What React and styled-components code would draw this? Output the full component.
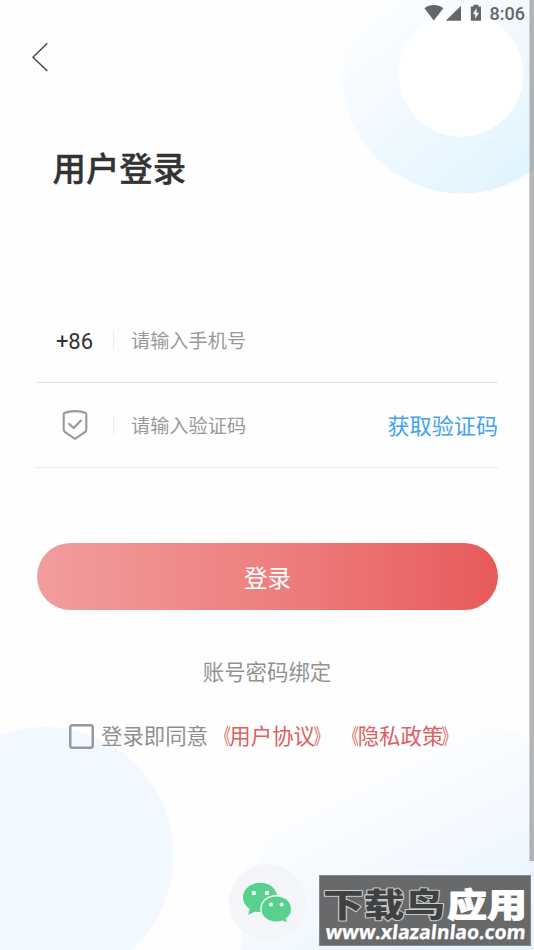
import React from "react";
import styled, { createGlobalStyle } from "styled-components";

const GlobalStyle = createGlobalStyle`
  *, *::before, *::after { box-sizing: border-box; }
  body { margin: 0; background: #fff; overflow: hidden; }
  button, input { font: inherit; border: 0; padding: 0; background: none; }
`;

const Screen = styled.main`
  position: relative;
  display: flex;
  flex-direction: column;
  width: 534px;
  height: 950px;
  overflow: hidden;
  isolation: isolate;
  background: #fefefe;
  color: #333;
  font-family: Roboto, "Noto Sans CJK SC", sans-serif;
`;

const Backdrop = styled.svg`
  position: absolute;
  inset: 0;
  z-index: -1;
`;

const StatusBar = styled.header`
  display: flex;
  justify-content: flex-end;
  height: 28px;
  padding-right: 9px;
  color: #666;
`;

const StatusIcons = styled.svg`
  display: block;
  width: 60px;
  height: 28px;
  margin-right: 6px;
`;

const Clock = styled.time`
  font-size: 18px;
  font-weight: 500;
  line-height: 28px;
`;

const BackButton = styled.button`
  display: block;
  width: 32px;
  height: 36px;
  margin: 11px 0 0 24px;
  svg { display: block; }
`;

const Title = styled.h1`
  margin: 70px 0 0 52.5px;
  font-size: 33.4px;
  font-weight: 500;
  line-height: 50px;
  -webkit-text-stroke: 0.4px #333;
`;

const Form = styled.form`
  display: flex;
  flex-direction: column;
  margin: 103px 36px 0;
`;

const Field = styled.label`
  display: flex;
  align-items: center;
  height: 85px;
  border-bottom: 1px solid ${(p) => p.$line};
`;

const Leading = styled.span`
  display: flex;
  flex: none;
  justify-content: center;
  width: 78px;
  height: 20px;
  align-items: center;
  border-right: 1px solid #ececec;
  svg { display: block; flex: none; }
`;

const DialCode = styled.span`
  padding-top: 3px;
  font-size: 22px;
  line-height: 28px;
`;

const Input = styled.input`
  flex: 1;
  min-width: 0;
  height: 32px;
  padding-top: 2px;
  margin-left: 17px;
  outline: none;
  font-size: 19.2px;
  &::placeholder { color: #999; opacity: 1; }
`;

const CodeButton = styled.button`
  flex: none;
  padding-top: 2px;
  color: #42a3ee;
  font-size: 22.1px;
  line-height: 32px;
`;

const LoginButton = styled.button`
  height: 67px;
  margin: 75px 0 0 1px;
  padding-top: 6px;
  border-radius: 34px;
  background: linear-gradient(90deg, #f19d9e 0%, #ee807f 50%, #e85a5b 100%);
  color: #fff;
  font-size: 23.6px;
  line-height: 61px;
`;

const BindLink = styled.button`
  align-self: center;
  margin-top: 47px;
  color: #929292;
  font-size: 21.4px;
  line-height: 32px;
`;

const Agreement = styled.div`
  display: flex;
  align-items: center;
  height: 32px;
  margin: 31px 0 0 69px;
  color: #8f8f8f;
  font-size: 21.4px;
  line-height: 32px;
  white-space: nowrap;
`;

const Checkbox = styled.span`
  flex: none;
  width: 25px;
  height: 25px;
  margin-right: 7px;
  border: 2px solid #999;
  border-radius: 3.5px;
  box-shadow: inset 0 0 0 0.5px #999;
`;

const Consent = styled.span`
  padding-top: 2px;
`;

const Policy = styled.span`
  color: #dc6060;
`;

const Bracket = styled.span`
  display: inline-block;
  width: 1em;
  transform: translateX(${(p) => (p.$side === "open" ? 1.5 : -1.5)}px) scaleX(0.7);
  transform-origin: ${(p) => (p.$side === "open" ? "right" : "left")} center;
`;

const WechatButton = styled.button`
  display: flex;
  align-self: center;
  align-items: center;
  justify-content: center;
  flex: none;
  width: 77px;
  height: 77px;
  margin-top: 112px;
  border-radius: 50%;
  background: #f4f5f9;
`;

const ScrollThumb = styled.div`
  position: absolute;
  top: 0;
  right: 0;
  width: 5px;
  height: 861px;
  border-left: 1px solid #cfcfcf;
  background: rgba(105, 105, 105, 0.48);
`;

const Stamp = styled.aside`
  position: absolute;
  left: 319px;
  top: 875px;
  width: 212px;
  height: 71px;
  border: 1px solid #858789;
  background: #67696a;
  svg { display: block; }
`;

function Background() {
  return (
    <Backdrop width="534" height="950" aria-hidden="true">
      <defs>
        <linearGradient id="ring" x1="0.12" y1="0.2" x2="0.78" y2="1">
          <stop offset="0" stopColor="#fdfeff" />
          <stop offset="0.45" stopColor="#f1f9ff" />
          <stop offset="1" stopColor="#def4ff" />
        </linearGradient>
        <linearGradient id="glow" gradientUnits="userSpaceOnUse" x1="388" y1="756" x2="493" y2="966">
          <stop offset="0" stopColor="#fdfeff" />
          <stop offset="1" stopColor="#e7f3ff" />
        </linearGradient>
      </defs>
      <circle cx="461.5" cy="74" r="119.5" fill="url(#ring)" />
      <circle cx="461" cy="74.5" r="62.3" fill="#fff" />
      <circle cx="45.5" cy="855" r="128" fill="#f1f8ff" />
      <circle cx="461" cy="945" r="220" fill="url(#glow)" />
    </Backdrop>
  );
}

function PolicyLink({ children }) {
  return (
    <Policy>
      <Bracket $side="open">《</Bracket>
      {children}
      <Bracket $side="close">》</Bracket>
    </Policy>
  );
}

export default function App() {
  return (
    <>
      <GlobalStyle />
      <Screen lang="zh-CN">
        <Background />
        <StatusBar>
          <StatusIcons viewBox="0 0 60 28" fill="#666">
            <path d="M0.4 8.2C5.8 3.8 14 3.8 19.3 8.2L9.8 20.5Z" />
            <path d="M21.7 20.8H37V5.7Z" />
            <path fillRule="evenodd" d="M46.8 6.5H49.5V4.7H54.3V6.5H57V20.8H46.8ZM52.5 8L48.8 14.2H51.2V18.8L55 12.7H52.5Z" />
          </StatusIcons>
          <Clock>8:06</Clock>
        </StatusBar>
        <BackButton aria-label="返回">
          <svg width="32" height="36" fill="none" stroke="#444" strokeWidth="1.4">
            <path d="M23.3 4.2L9 18.2L23.3 32" />
          </svg>
        </BackButton>
        <Title>用户登录</Title>
        <Form onSubmit={(e) => e.preventDefault()}>
          <Field $line="#e0e4e5">
            <Leading>
              <DialCode>+86</DialCode>
            </Leading>
            <Input placeholder="请输入手机号" />
          </Field>
          <Field $line="#e9ebec">
            <Leading>
              <svg width="28" height="32" viewBox="0 0 28 32" fill="none" stroke="#999" strokeWidth="2.1" strokeLinecap="round" strokeLinejoin="round">
                <path d="M14 2.1C18.4 2.1 22 2.8 24.2 3.8Q25.3 4.2 25.3 5.4V20.2Q25.3 22 23.9 23.2L14 29.8L4.1 23.2Q2.7 22 2.7 20.2V5.4Q2.7 4.2 3.8 3.8C6 2.8 9.6 2.1 14 2.1Z" />
                <path d="M8.1 14.9L12.6 19L20 11.6" />
              </svg>
            </Leading>
            <Input placeholder="请输入验证码" />
            <CodeButton type="button">获取验证码</CodeButton>
          </Field>
          <LoginButton>登录</LoginButton>
        </Form>
        <BindLink>账号密码绑定</BindLink>
        <Agreement>
          <Checkbox role="checkbox" aria-checked="false" />
          <Consent>
            登录即同意
            <PolicyLink>用户协议</PolicyLink>
            <PolicyLink>隐私政策</PolicyLink>
          </Consent>
        </Agreement>
        <WechatButton aria-label="微信登录">
          <svg width="50" height="42" viewBox="0 0 50 42">
            <path fill="#58d08e" d="M18 .8C8.5.8 1 6.9 1 15.2C1 20 3.4 24 7.7 26.7L6.2 32.8L13.4 29.6C14.8 30 16.4 30.1 18 30.1C27.5 30.1 35.2 23.5 35.2 15.2C35.2 6.9 27.5.8 18 .8Z" />
            <path fill="#58d08e" stroke="#f4f5f9" strokeWidth="1.4" d="M34.2 13.8C25.5 13.8 18.9 19.3 18.9 27.2C18.9 35.1 25.5 40.2 34.2 40.2C36.6 40.2 38.7 39.8 40.6 39.2L46.2 42L44.5 36.8C47.8 34.5 49.7 31.2 49.7 27.2C49.7 19.3 43 13.8 34.2 13.8Z" />
            <g fill="#fff">
              <circle cx="11.8" cy="11" r="2.2" />
              <circle cx="25" cy="11" r="2.2" />
              <circle cx="29" cy="22.5" r="2" />
              <circle cx="39.6" cy="22.5" r="2" />
            </g>
          </svg>
        </WechatButton>
        <ScrollThumb />
        <Stamp>
          <svg width="210" height="69">
            <g fontFamily="Roboto, 'Noto Sans CJK SC', sans-serif" fontWeight="900" fontSize="41" strokeLinejoin="round" paintOrder="stroke" transform="translate(0 41) scale(1 .8)">
              <text x="3" y="0" textLength="122" lengthAdjust="spacingAndGlyphs" fill="#3f4142" stroke="#c8c9ca" strokeWidth="2.5">下载鸟</text>
              <text x="127" y="0" textLength="80" lengthAdjust="spacingAndGlyphs" fill="#fff" stroke="#fff" strokeWidth="1">应用</text>
            </g>
            <text x="0" y="0" transform="translate(5 63) skewX(-6)" textLength="200" lengthAdjust="spacingAndGlyphs" fontFamily="'Open Sans', sans-serif" fontWeight="700" fontSize="19.5" fill="#fff" stroke="#fff" strokeWidth="0.3">www.xlazalnlao.com</text>
          </svg>
        </Stamp>
      </Screen>
    </>
  );
}
